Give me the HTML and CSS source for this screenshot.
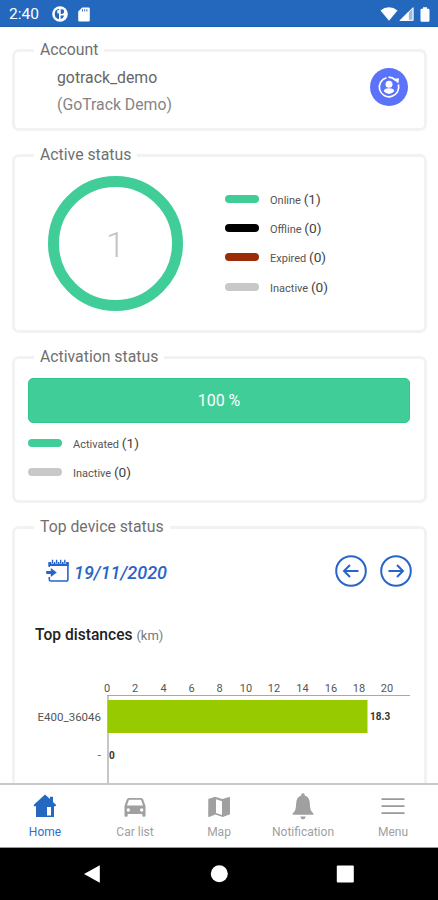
FILE: index.html
```html
<!DOCTYPE html>
<html lang="en">
<head>
<meta charset="utf-8">
<meta name="viewport" content="width=device-width, initial-scale=1">
<title>GoTrack</title>
<link rel="stylesheet" href="styles.css">
</head>
<body>
<div class="screen">
  <header class="statusbar">
    <span class="clock">2:40</span>
    <svg class="sb-app" width="16" height="16" viewBox="0 0 16 16"><circle cx="8" cy="8" r="7.8" fill="#fff"/><path d="M7 2.800a5.300 5.300 0 0 0 0 10.400z" fill="#2468be"/><path d="M8.600 3.300h1.300a2.300 2.300 0 0 1 0 4.600H8.600zM8.600 9.500h3.600a4.500 4.500 0 0 1-3.600 3.500z" fill="#2468be"/><path d="M5.300 4.200h3v3.200h-3z" fill="#fff"/></svg>
    <svg class="sb-card" width="12" height="15" viewBox="0 0 12 15"><path d="M4.2.5h6.3A1.3 1.3 0 0 1 11.800 1.800v11.400a1.300 1.300 0 0 1-1.300 1.300h-9A1.300 1.300 0 0 1 .2 13.200V4.500z" fill="#fff"/><path d="M4.500 2.200v2.300M6.700 2.200v2.300M8.900 2.200v2.300" stroke="#2468be" stroke-width=".9"/></svg>
    <span class="spacer"></span>
    <svg class="sb-wifi" width="18" height="14" viewBox="0 0 18 14"><path d="M.5 3.400Q4.300.3 9 .3t8.500 3.100L9 13.800z" fill="#fff"/></svg>
    <svg class="sb-signal" width="15" height="14" viewBox="0 0 15 14"><path d="M14.500 0v13.800H.4z" fill="#fff" opacity=".55"/><path d="M9.800 4.600v9.200H.4z" fill="#fff"/><path d="M14 .8V13.300H1.600z" fill="none" stroke="#fff"/></svg>
    <svg class="sb-batt" width="10" height="15" viewBox="0 0 10 15"><path d="M3 .2h4v1.500h1.300A1.200 1.200 0 0 1 9.500 3v10.500a1.200 1.200 0 0 1-1.200 1.200H1.700A1.200 1.200 0 0 1 .5 13.500V3a1.200 1.200 0 0 1 1.200-1.300H3z" fill="#fff"/></svg>
  </header>

  <main class="content">
    <fieldset class="card account">
      <legend>Account</legend>
      <div class="account-row">
        <div class="names">
          <div class="login">gotrack_demo</div>
          <div class="fullname">(GoTrack Demo)</div>
        </div>
        <svg class="switch-user" width="38" height="38" viewBox="0 0 38 38"><circle cx="19" cy="19" r="19" fill="#5b73f8"/><g fill="none" stroke="#fff" stroke-width="1.700"><path d="M16.500 9.700A9.700 9.700 0 1 0 28.400 16.500"/><path d="M18.500 9.200Q22.500 9.300 25.500 12"/></g><path d="M23 11l6-.8-.6 5.300z" fill="#fff"/><circle cx="19" cy="16.200" r="3.500" fill="#fff"/><path d="M13.800 23.300q0-3 5.200-3t5.200 3Q22 26 19 26t-5.200-2.700z" fill="#fff"/></svg>
      </div>
    </fieldset>

    <fieldset class="card active">
      <legend>Active status</legend>
      <div class="active-row">
        <div class="ring">1</div>
        <ul class="legend-list">
          <li><i class="pill green"></i><span>Online <b>(1)</b></span></li>
          <li><i class="pill black"></i><span>Offline <b>(0)</b></span></li>
          <li><i class="pill red"></i><span>Expired <b>(0)</b></span></li>
          <li><i class="pill gray"></i><span>Inactive <b>(0)</b></span></li>
        </ul>
      </div>
    </fieldset>

    <fieldset class="card activation">
      <legend>Activation status</legend>
      <div class="progress">100 %</div>
      <ul class="legend-list">
        <li><i class="pill green"></i><span>Activated <b>(1)</b></span></li>
        <li><i class="pill gray"></i><span>Inactive <b>(0)</b></span></li>
      </ul>
    </fieldset>

    <fieldset class="card top">
      <legend>Top device status</legend>
      <div class="date-row">
        <svg width="24" height="24" viewBox="0 0 24 24"><path d="M3.300 8V4.200H21.900V20.500a1.500 1.500 0 0 1-1.500 1.500H4.800a1.500 1.500 0 0 1-1.500-1.500V18" fill="none" stroke="#2766c8" stroke-width="1.600"/><path d="M2.500 3h20.200v4H2.500z" fill="#2766c8"/><path d="M6.500.8v4M10.600.8v4M14.700.8v4M18.800.8v4" stroke="#fff" stroke-width="2.600"/><path d="M6.500.8v3.600M10.600.8v3.600M14.700.8v3.600M18.800.8v3.600" stroke="#2766c8" stroke-width="1.400"/><path d="M.2 12h4.600V9l6 4.500-6 4.500v-3H.2z" fill="#2766c8"/></svg>
        <span class="date">19/11/2020</span>
        <svg class="arrow" width="32" height="32" viewBox="0 0 32 32"><circle cx="16" cy="16" r="14.800"/><path d="M23.500 16H9.500M15 10l-6 6 6 6"/></svg>
        <svg class="arrow" width="32" height="32" viewBox="0 0 32 32"><circle cx="16" cy="16" r="14.800"/><path d="M8.500 16h14M17 10l6 6-6 6"/></svg>
      </div>
      <h2>Top distances <small>(km)</small></h2>
      <svg class="chart" width="412" height="110" viewBox="14 674 412 110">
        <path d="M108 694V784" stroke="#bdbdbd" stroke-width="1.700"/>
        <path d="M107 694.500H410" stroke="#a8a8a8" stroke-width="1.200"/>
        <rect x="107.500" y="699" width="260" height="33" fill="#97cb00"/>
        <g class="ticks">
          <text x="107" y="691">0</text><text x="135" y="691">2</text><text x="163.500" y="691">4</text><text x="191.500" y="691">6</text><text x="219.500" y="691">8</text><text x="246" y="691">10</text><text x="274" y="691">12</text><text x="302.500" y="691">14</text><text x="331" y="691">16</text><text x="359" y="691">18</text><text x="387" y="691">20</text>
        </g>
        <g class="names-axis"><text x="101" y="719.500">E400_36046</text><text x="101" y="758">-</text></g>
        <g class="values"><text x="370" y="719">18.3</text><text x="109" y="757.500">0</text></g>
      </svg>
    </fieldset>
  </main>

  <nav class="tabs">
    <a class="tab on"><svg width="26" height="28" viewBox="0 0 26 28"><path fill="#2468c0" fill-rule="evenodd" d="M13 2.500l5 4.600V4.800h3v5.300l3.200 3-.7 1.100H22V25H4V14.200H2.200l-.6-1.100zM15 15v8.500h4V15z"/></svg><span>Home</span></a>
    <a class="tab"><svg width="26" height="28" viewBox="0 0 26 28"><path fill="#a0a0a0" fill-rule="evenodd" d="M7 6h12q1.700 0 2.200 1.500L23.500 14v9.500q0 1.200-1.200 1.200h-.8q-1.200 0-1.200-1.200V22H5.700v1.500q0 1.200-1.200 1.200h-.8q-1.200 0-1.200-1.200V14l2.300-6.500Q5.300 6 7 6zM7 7.700L4.900 13.600H21L19 7.700zM6.300 16.300a1.700 1.700 0 1 0 0 3.400 1.700 1.700 0 0 0 0-3.400zm13.400 0a1.700 1.700 0 1 0 0 3.400 1.700 1.700 0 0 0 0-3.400z"/></svg><span>Car list</span></a>
    <a class="tab"><svg width="26" height="28" viewBox="0 0 26 28"><path fill="#a0a0a0" fill-rule="evenodd" d="M2.300 7L9 4.800l7.500 2.300L23 5q1-.2 1 .8v16.400L16.800 25 9.300 22.500 3.200 25q-1 .2-1-.8zM10 7.200v13.700l6 2V9.200z"/></svg><span>Map</span></a>
    <a class="tab"><svg width="26" height="28" viewBox="0 0 26 28"><path fill="#a0a0a0" d="M13 1.300a1.700 1.700 0 0 1 1.700 2.300q4.700 1.300 5.100 7.400.2 6.800 2 8.700l1.600 1.700v1.400H2.600v-1.400l1.600-1.700q1.800-1.900 2-8.700.4-6.100 5.100-7.400A1.700 1.700 0 0 1 13 1.300zM10.200 24.500h5.600q-.6 2.700-2.800 2.700t-2.800-2.700z"/></svg><span>Notification</span></a>
    <a class="tab"><svg width="26" height="28" viewBox="0 0 26 28"><path d="M1.500 7.200h23M1.500 14.200h23M1.500 21.200h23" stroke="#999" stroke-width="1.700"/></svg><span>Menu</span></a>
  </nav>

  <footer class="sysnav">
    <svg width="438" height="52" viewBox="0 0 438 52" fill="#fff"><path d="M84 26L99.800 17.200V34.800z"/><circle cx="219.300" cy="25.700" r="8.500"/><rect x="336.800" y="17.400" width="17" height="17" rx="1"/></svg>
  </footer>
</div>
</body>
</html>
```
FILE: styles.css
```css
* { box-sizing: border-box; }
body { margin: 0; background: #fff; font-family: Roboto, "Liberation Sans", sans-serif; }
svg { display: block; flex: none; }
.screen { width: 438px; height: 900px; display: flex; flex-direction: column; overflow: hidden; }

.statusbar { height: 27px; flex: none; background: #2468be; display: flex; align-items: center; padding: 2px 8px 0 9px; border-bottom: 1px solid #1f5fb0; }
.clock { color: #fff; font-size: 15.5px; width: 43px; }
.sb-card { margin-left: 10px; }
.spacer { flex: 1; }
.sb-signal { margin-left: 1px; }
.sb-batt { margin-left: 6px; }

.content { flex: 1; min-height: 0; overflow: hidden; padding: 13px 11px 0 12px; }
.card { min-width: 0; margin: 0 0 14px; padding: 0; border: 3px solid #f2f2f2; border-radius: 7px; }
.card legend { margin-left: 19px; padding: 0 6px; height: 20px; line-height: 20px; font-size: 15.800px; color: #707070; white-space: nowrap; }
.account { height: 91px; }
.active { height: 188px; }
.activation { height: 156px; }
.top { height: 330px; }

.account-row { display: flex; justify-content: space-between; align-items: flex-start; padding: 4px 16px 0 42px; }
.names { font-size: 15.800px; line-height: 27px; color: #666; }
.fullname { color: #858585; }
.switch-user { margin-top: 4px; }

.active-row { display: flex; align-items: flex-start; padding: 11px 0 0 33px; }
.ring { width: 135px; height: 135px; flex: none; border: 11px solid #41cd98; border-radius: 50%; display: flex; align-items: center; justify-content: center; padding-top: 4px; font-size: 35px; font-weight: 300; color: #c4c4c4; }
.legend-list { list-style: none; margin: 0; padding: 0; color: #555; font-size: 11px; }
.legend-list li { height: 29.300px; display: flex; align-items: center; }
.legend-list b { font-size: 13.700px; font-weight: 400; color: #444; }
.active .legend-list { margin: 8px 0 0 42px; }
.pill { width: 34px; height: 8px; border-radius: 4px; margin-right: 11px; }
.green { background: #41cd98; }
.black { background: #000; }
.red { background: #9c2c08; }
.gray { background: #c8c8c8; }

.progress { height: 45px; margin: 11px 14px 5px 13px; border-radius: 5px; background: #41cd98; border: 1px solid #2fc78c; color: #fff; font-size: 16px; display: flex; align-items: center; justify-content: center; }
.activation .legend-list { margin-left: 13px; }

.date-row { display: flex; align-items: center; padding: 18px 12px 0 31px; }
.date { flex: 1; margin: 2px 0 0 4px; color: #2766c8; font-size: 18px; font-weight: 500; font-style: italic; }
.arrow { fill: none; stroke: #2766c8; stroke-width: 2; }
.arrow + .arrow { margin-left: 13px; }
h2 { margin: 37px 0 0 20px; font-size: 15.600px; line-height: 22px; font-weight: 500; color: #222; }
h2 small { font-size: 13px; font-weight: 400; color: #777; }
.chart { margin: 28px 0 0 -1px; font-size: 11px; fill: #555; }
.ticks { text-anchor: middle; }
.names-axis { text-anchor: end; font-size: 11.500px; }
.values { font-size: 10px; font-weight: 700; fill: #333; }

.tabs { height: 65px; flex: none; display: flex; justify-content: space-between; border-top: 2px solid #c9c9c9; border-bottom: 1px solid #999; background: #fff; padding: 7px 0 0; }
.tab { width: 90px; display: flex; flex-direction: column; align-items: center; font-size: 12px; line-height: 16px; color: #a0a0a0; }
.tab:nth-child(3) { width: 78px; }
.tab:nth-child(2), .tab:nth-child(4) { width: 90px; }
.tab span { margin-top: 4px; }
.on { color: #2f6fca; }
.sysnav { height: 52px; flex: none; background: #000; }
```
